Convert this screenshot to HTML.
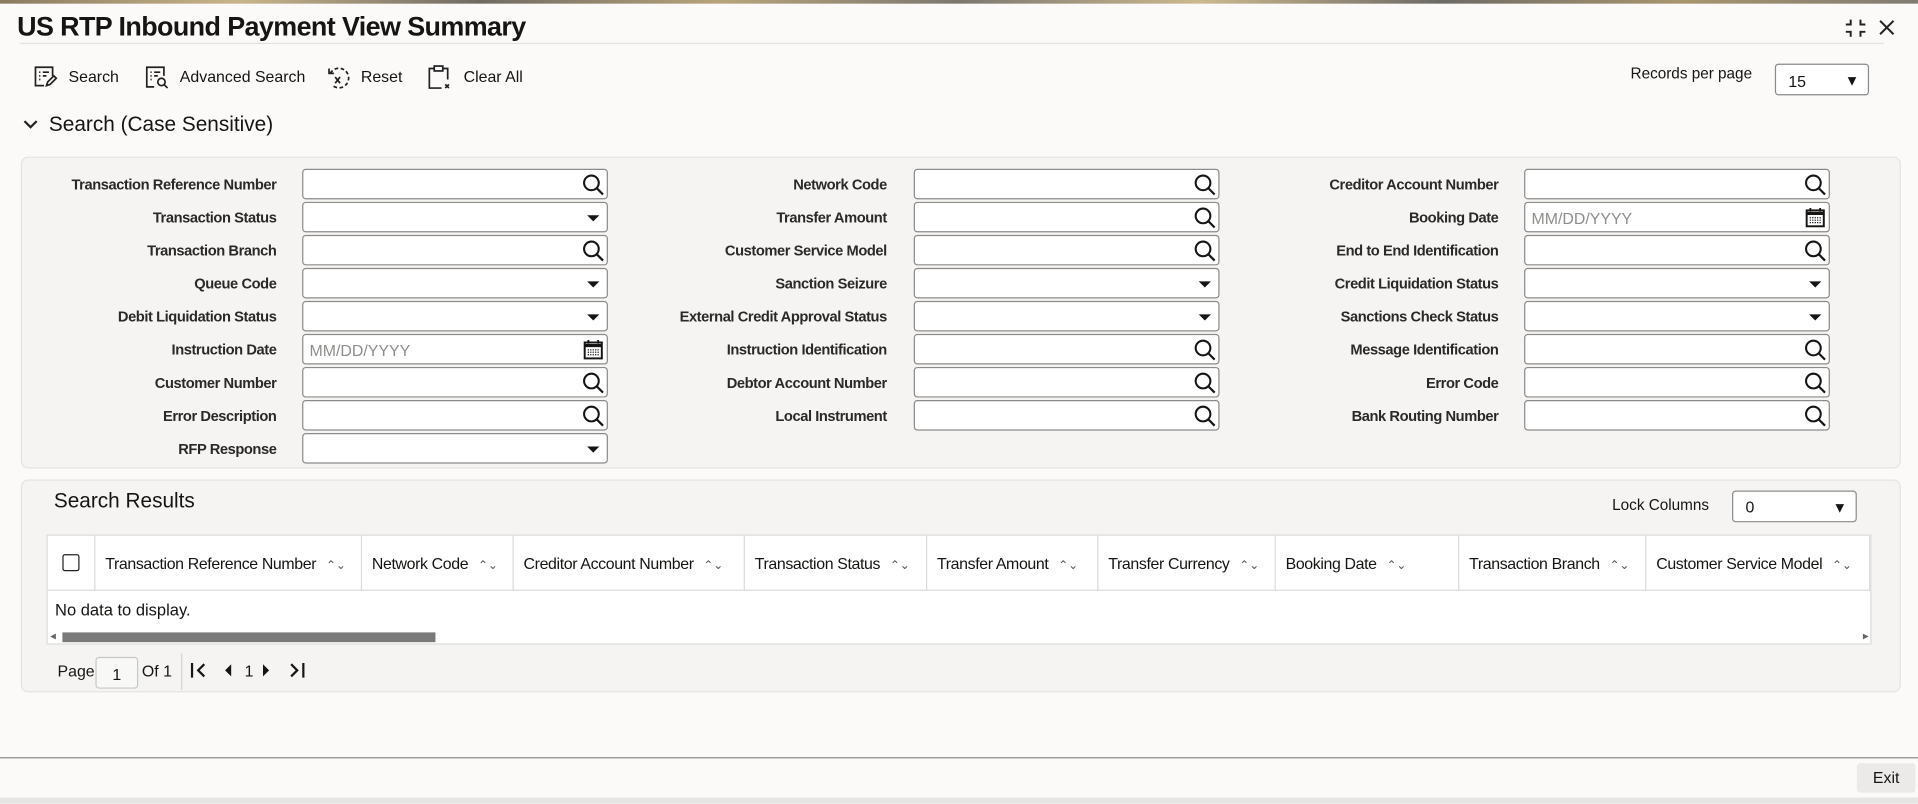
<!DOCTYPE html>
<html><head><meta charset="utf-8">
<style>
html,body{margin:0;padding:0;width:1918px;height:803px;overflow:hidden;background:#fbfaf9;}
#w{position:absolute;left:0;top:0;width:1568px;height:657px;transform:scale(1.2232);transform-origin:0 0;font-family:"Liberation Sans",sans-serif;color:#161513;}
.a{position:absolute;white-space:nowrap;}
.lbl{position:absolute;font-size:12px;font-weight:bold;color:#2a2927;text-align:right;width:220px;letter-spacing:-0.35px;}
.in{position:absolute;width:250px;height:25px;border:1px solid #8c8b89;border-radius:3px;background:#fff;box-sizing:border-box;}
.in svg{position:absolute;right:2px;top:3px;}
.ph{position:absolute;left:5px;top:5px;font-size:13px;color:#8f8e8c;}
.panel{position:absolute;background:#f5f4f2;border:1px solid #e4e3e1;border-radius:6px;}
.th{position:absolute;top:0;height:45px;line-height:45px;font-size:13px;border-left:1px solid #dcdbd9;padding-left:8px;letter-spacing:-0.3px;box-sizing:border-box;}
.srt{font-size:10px;color:#555;margin-left:8px;}
.tb{position:absolute;top:55px;font-size:13px;}
</style></head><body><div id="w">
<div class="a" style="left:0;top:0;width:1568px;height:3px;background:linear-gradient(90deg,#8a7a60,#c9b58a,#6f6a63,#b8a47a,#7b7770,#cdb98e,#6d6a66,#a8956d,#807b73)"></div>
<div class="a" style="left:14px;top:9px;font-size:22px;font-weight:bold;letter-spacing:-0.5px">US RTP Inbound Payment View Summary</div>
<div class="a" style="left:16px;top:35px;width:1524px;height:1px;background:#e2e1df"></div>
<svg class="a" style="left:1507px;top:13px" width="20" height="20" viewBox="0 0 20 20" fill="none" stroke="#222" stroke-width="1.6"><path d="M2 7h4V3M14 3v4h4M2 13h4v4M14 17v-4h4"/></svg>
<svg class="a" style="left:1535px;top:15px" width="15" height="15" viewBox="0 0 15 15" stroke="#222" stroke-width="1.6"><path d="M2 2l11 11M13 2L2 13"/></svg>

<svg class="a" style="left:27px;top:53px" width="20" height="20" viewBox="0 0 20 20" fill="none" stroke="#222" stroke-width="1.4"><path d="M9 17H2V2h14v7"/><path d="M5 6h1M8 6h5M5 9h1M8 9h3M5 12h1"/><path d="M11 17l1-3 5-5 2 2-5 5z"/></svg>
<div class="tb" style="left:56px">Search</div>
<svg class="a" style="left:118px;top:53px" width="20" height="20" viewBox="0 0 20 20" fill="none" stroke="#222" stroke-width="1.4"><path d="M8 18H2V2h14v7"/><path d="M5 6h1M8 6h5M5 9h1M8 9h3M5 12h1"/><circle cx="14" cy="14" r="3"/><path d="M16 16l3 3"/></svg>
<div class="tb" style="left:147px">Advanced Search</div>
<svg class="a" style="left:266px;top:53px" width="22" height="20" viewBox="0 0 22 20" fill="none" stroke="#222" stroke-width="1.4"><path d="M4 7a8 8 0 1 1 2 10" stroke-dasharray="3 2"/><path d="M3 3v4h4"/><path d="M8 10l4 5M12 10l-4 5"/></svg>
<div class="tb" style="left:295px">Reset</div>
<svg class="a" style="left:349px;top:52px" width="20" height="22" viewBox="0 0 20 22" fill="none" stroke="#222" stroke-width="1.4"><path d="M12 20H2V4h4M13 4h4v9"/><rect x="6" y="2" width="7" height="4"/><path d="M15 17l3 3M18 17l-3 3"/></svg>
<div class="tb" style="left:379px">Clear All</div>

<div class="a" style="left:1333px;top:53px;font-size:12.5px">Records per page</div>
<div class="in" style="left:1451px;top:52px;width:77px;height:26px;"><span class="a" style="left:10px;top:6px;font-size:13px">15</span><span class="a" style="right:7px;top:6px;font-size:12px">▼</span></div>

<svg class="a" style="left:18px;top:97px" width="14" height="10" viewBox="0 0 14 10" fill="none" stroke="#222" stroke-width="1.8"><path d="M2 2l5 5 5-5"/></svg>
<div class="a" style="left:40px;top:92px;font-size:17px">Search (Case Sensitive)</div>

<div class="panel" style="left:17px;top:128px;width:1535px;height:253px"></div>

<div class="lbl" style="left:6px;top:144px">Transaction Reference Number</div>
<div class="lbl" style="left:6px;top:171px">Transaction Status</div>
<div class="lbl" style="left:6px;top:198px">Transaction Branch</div>
<div class="lbl" style="left:6px;top:225px">Queue Code</div>
<div class="lbl" style="left:6px;top:252px">Debit Liquidation Status</div>
<div class="lbl" style="left:6px;top:279px">Instruction Date</div>
<div class="lbl" style="left:6px;top:306px">Customer Number</div>
<div class="lbl" style="left:6px;top:333px">Error Description</div>
<div class="lbl" style="left:6px;top:360px">RFP Response</div>
<div class="lbl" style="left:505px;top:144px">Network Code</div>
<div class="lbl" style="left:505px;top:171px">Transfer Amount</div>
<div class="lbl" style="left:505px;top:198px">Customer Service Model</div>
<div class="lbl" style="left:505px;top:225px">Sanction Seizure</div>
<div class="lbl" style="left:505px;top:252px">External Credit Approval Status</div>
<div class="lbl" style="left:505px;top:279px">Instruction Identification</div>
<div class="lbl" style="left:505px;top:306px">Debtor Account Number</div>
<div class="lbl" style="left:505px;top:333px">Local Instrument</div>
<div class="lbl" style="left:1005px;top:144px">Creditor Account Number</div>
<div class="lbl" style="left:1005px;top:171px">Booking Date</div>
<div class="lbl" style="left:1005px;top:198px">End to End Identification</div>
<div class="lbl" style="left:1005px;top:225px">Credit Liquidation Status</div>
<div class="lbl" style="left:1005px;top:252px">Sanctions Check Status</div>
<div class="lbl" style="left:1005px;top:279px">Message Identification</div>
<div class="lbl" style="left:1005px;top:306px">Error Code</div>
<div class="lbl" style="left:1005px;top:333px">Bank Routing Number</div>

<svg width="0" height="0" style="position:absolute"><defs>
<symbol id="q" viewBox="0 0 18 18"><circle cx="7.5" cy="7.5" r="6" fill="none" stroke="#161513" stroke-width="1.7"/><path d="M12 12l5 5" stroke="#161513" stroke-width="1.8"/></symbol>
<symbol id="d" viewBox="0 0 18 18"><path d="M4 7h10l-5 5z" fill="#161513"/></symbol>
<symbol id="c" viewBox="0 0 18 18"><rect x="2" y="3" width="14" height="13" fill="none" stroke="#161513" stroke-width="1.6"/><path d="M2 5.5h14" stroke="#161513" stroke-width="2.5"/><path d="M5 1v3M13 1v3" stroke="#161513" stroke-width="1.5"/><path d="M4.5 9h9M4.5 11h9M4.5 13h9" stroke="#161513" stroke-width="1" stroke-dasharray="1 1"/></symbol>
</defs></svg>

<div class="in" style="left:247px;top:138px"><svg width="18" height="18"><use href="#q"/></svg></div>
<div class="in" style="left:247px;top:165px"><svg width="18" height="18"><use href="#d"/></svg></div>
<div class="in" style="left:247px;top:192px"><svg width="18" height="18"><use href="#q"/></svg></div>
<div class="in" style="left:247px;top:219px"><svg width="18" height="18"><use href="#d"/></svg></div>
<div class="in" style="left:247px;top:246px"><svg width="18" height="18"><use href="#d"/></svg></div>
<div class="in" style="left:247px;top:273px"><span class="ph">MM/DD/YYYY</span><svg width="18" height="18"><use href="#c"/></svg></div>
<div class="in" style="left:247px;top:300px"><svg width="18" height="18"><use href="#q"/></svg></div>
<div class="in" style="left:247px;top:327px"><svg width="18" height="18"><use href="#q"/></svg></div>
<div class="in" style="left:247px;top:354px"><svg width="18" height="18"><use href="#d"/></svg></div>

<div class="in" style="left:747px;top:138px"><svg width="18" height="18"><use href="#q"/></svg></div>
<div class="in" style="left:747px;top:165px"><svg width="18" height="18"><use href="#q"/></svg></div>
<div class="in" style="left:747px;top:192px"><svg width="18" height="18"><use href="#q"/></svg></div>
<div class="in" style="left:747px;top:219px"><svg width="18" height="18"><use href="#d"/></svg></div>
<div class="in" style="left:747px;top:246px"><svg width="18" height="18"><use href="#d"/></svg></div>
<div class="in" style="left:747px;top:273px"><svg width="18" height="18"><use href="#q"/></svg></div>
<div class="in" style="left:747px;top:300px"><svg width="18" height="18"><use href="#q"/></svg></div>
<div class="in" style="left:747px;top:327px"><svg width="18" height="18"><use href="#q"/></svg></div>

<div class="in" style="left:1246px;top:138px"><svg width="18" height="18"><use href="#q"/></svg></div>
<div class="in" style="left:1246px;top:165px"><span class="ph">MM/DD/YYYY</span><svg width="18" height="18"><use href="#c"/></svg></div>
<div class="in" style="left:1246px;top:192px"><svg width="18" height="18"><use href="#q"/></svg></div>
<div class="in" style="left:1246px;top:219px"><svg width="18" height="18"><use href="#d"/></svg></div>
<div class="in" style="left:1246px;top:246px"><svg width="18" height="18"><use href="#d"/></svg></div>
<div class="in" style="left:1246px;top:273px"><svg width="18" height="18"><use href="#q"/></svg></div>
<div class="in" style="left:1246px;top:300px"><svg width="18" height="18"><use href="#q"/></svg></div>
<div class="in" style="left:1246px;top:327px"><svg width="18" height="18"><use href="#q"/></svg></div>

<div class="panel" style="left:17px;top:392px;width:1535px;height:172px"></div>
<div class="a" style="left:44px;top:400px;font-size:17px">Search Results</div>
<div class="a" style="left:1318px;top:406px;font-size:12.5px">Lock Columns</div>
<div class="in" style="left:1416px;top:401px;width:102px;height:26px"><span class="a" style="left:10px;top:5px;font-size:13px">0</span><span class="a" style="right:7px;top:6px;font-size:12px">▼</span></div>

<div class="a" style="left:38px;top:437px;width:1492px;height:90px;background:#fff;border:1px solid #dcdbd9;box-sizing:border-box;overflow:hidden">
 <div class="a" style="left:0;top:44px;width:1492px;height:1px;background:#dcdbd9"></div>
 <div class="a" style="left:12px;top:15px;width:14px;height:14px;border:1.5px solid #222;border-radius:2px;box-sizing:border-box"></div>
 <div class="th" style="left:38px;width:218px">Transaction Reference Number<span class="srt">⌃⌄</span></div>
 <div class="th" style="left:256px;width:124px">Network Code<span class="srt">⌃⌄</span></div>
 <div class="th" style="left:380px;width:189px">Creditor Account Number<span class="srt">⌃⌄</span></div>
 <div class="th" style="left:569px;width:149px">Transaction Status<span class="srt">⌃⌄</span></div>
 <div class="th" style="left:718px;width:140px">Transfer Amount<span class="srt">⌃⌄</span></div>
 <div class="th" style="left:858px;width:145px">Transfer Currency<span class="srt">⌃⌄</span></div>
 <div class="th" style="left:1003px;width:150px">Booking Date<span class="srt">⌃⌄</span></div>
 <div class="th" style="left:1153px;width:153px">Transaction Branch<span class="srt">⌃⌄</span></div>
 <div class="th" style="left:1306px;width:183px">Customer Service Model<span class="srt">⌃⌄</span></div>
 <div class="th" style="left:1489px;width:10px"></div>
 <div class="a" style="left:6px;top:53px;font-size:13.5px">No data to display.</div>
 <div class="a" style="left:2px;top:79px;font-size:6px;color:#666">◀</div>
 <div class="a" style="left:12px;top:79px;width:305px;height:8px;background:#7a7a7a"></div>
 <div class="a" style="left:1484px;top:79px;font-size:6px;color:#666">▶</div>
</div>

<div class="a" style="left:47px;top:541px;font-size:13px">Page</div>
<div class="a" style="left:78px;top:537px;width:35px;height:26px;border:1px solid #c8c7c5;border-radius:3px;background:#f8f8f7;box-sizing:border-box;font-size:13px;text-align:center;line-height:28px">1</div>
<div class="a" style="left:116px;top:541px;font-size:13px">Of 1</div>
<div class="a" style="left:148px;top:534px;width:1px;height:30px;background:#d5d4d2"></div>
<svg class="a" style="left:154px;top:541px" width="100" height="14" viewBox="0 0 100 14" fill="none" stroke="#161513" stroke-width="1.8"><path d="M3 1v12M13 2L8 7l5 5"/><path d="M35 2v10l-5-5z" fill="#161513" stroke="none"/><text x="46" y="12" font-size="13" fill="#161513" stroke="none" font-family="Liberation Sans">1</text><path d="M61 2v10l5-5z" fill="#161513" stroke="none"/><path d="M84 2l5 5-5 5M94 1v12"/></svg>

<div class="a" style="left:0;top:619px;width:1568px;height:1px;background:#8a8988"></div>
<div class="a" style="left:1518px;top:624px;width:48px;height:24px;background:#ebeae8;border-radius:3px;font-size:13px;text-align:center;line-height:24px">Exit</div>
<div class="a" style="left:0;top:652px;width:1568px;height:5px;background:#e6e5e3"></div>
</div></body></html>
